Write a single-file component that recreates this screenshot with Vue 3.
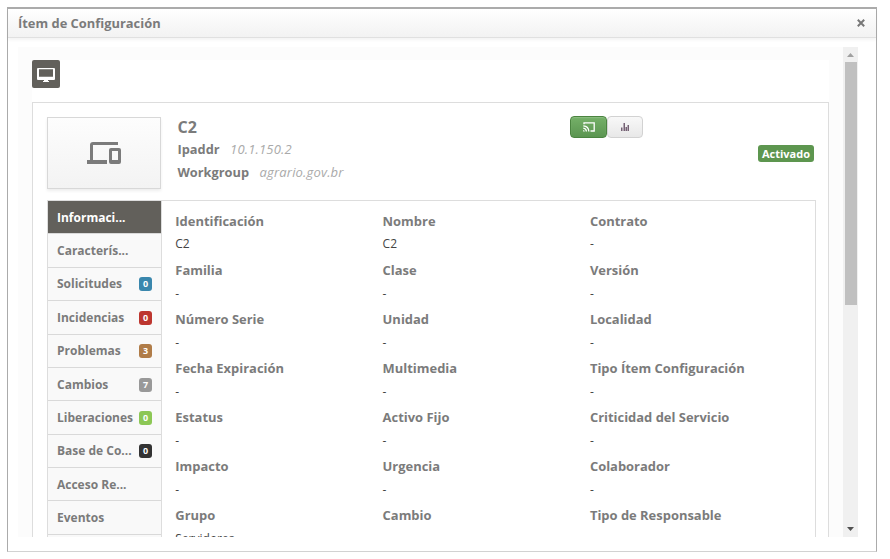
<script setup>
const tabs = [
  { label: 'Informaci...', active: true },
  { label: 'Caracterís...' },
  { label: 'Solicitudes', count: 0, tone: 'blue' },
  { label: 'Incidencias', count: 0, tone: 'red' },
  { label: 'Problemas', count: 3, tone: 'brown' },
  { label: 'Cambios', count: 7, tone: 'gray' },
  { label: 'Liberaciones', count: 0, tone: 'green' },
  { label: 'Base de Co...', count: 0, tone: 'dark' },
  { label: 'Acceso Re...' },
  { label: 'Eventos' },
  { label: '' },
]

const fields = [
  ['Identificación', 'C2'], ['Nombre', 'C2'], ['Contrato', '-'],
  ['Familia', '-'], ['Clase', '-'], ['Versión', '-'],
  ['Número Serie', '-'], ['Unidad', '-'], ['Localidad', '-'],
  ['Fecha Expiración', '-'], ['Multimedia', '-'], ['Tipo Ítem Configuración', '-'],
  ['Estatus', '-'], ['Activo Fijo', '-'], ['Criticidad del Servicio', '-'],
  ['Impacto', '-'], ['Urgencia', '-'], ['Colaborador', '-'],
  ['Grupo', 'Servidores'], ['Cambio', ''], ['Tipo de Responsable', ''],
]
</script>

<template>
  <div class="window">
    <header class="titlebar">
      <span class="title">Ítem de Configuración</span>
      <svg class="close" viewBox="0 0 8 8" width="8" height="8"><path d="M.8 .8l6.4 6.4M7.2 .8L.8 7.2" /></svg>
    </header>
    <div class="viewport">
      <div class="content">
        <button class="monitor">
          <svg viewBox="0 0 18 14" width="18" height="14">
            <path fill="#fff" fill-rule="evenodd" d="M1 0H17Q18 0 18 1V11Q18 12 17 12H11V13H12V14H6V13H7V12H1Q0 12 0 11V1Q0 0 1 0ZM2 1.3V8.7H16V1.3Z" />
          </svg>
        </button>
        <section class="card">
          <div class="summary">
            <div class="thumb">
              <svg viewBox="0 0 34 23" width="34" height="23">
                <path fill="#7b7b7b" fill-rule="evenodd" d="M6 3V18H20V22H0V18H3V3Q3 0 6 0H31V3ZM24 6H32Q34 6 34 8V20Q34 22 32 22H24Q22 22 22 20V8Q22 6 24 6ZM25 9V18H31V9Z" />
              </svg>
            </div>
            <div class="info">
              <h1>C2</h1>
              <p><b>Ipaddr</b><i>10.1.150.2</i></p>
              <p><b>Workgroup</b><i>agrario.gov.br</i></p>
            </div>
            <div class="actions">
              <button class="act primary">
                <svg viewBox="0 0 12 10" width="12" height="10" fill="none" stroke="#fff" stroke-width="1.3">
                  <path d="M1 2.3V.8H11.2V9H7.5M.3 3.8Q5.8 4 5.8 9.6M.3 6.2Q3.3 6.5 3.4 9.6" /><path d="M.2 9.6V8Q1.7 8 1.8 9.6Z" fill="#fff" stroke="none" />
                </svg>
              </button>
              <button class="act plain">
                <svg viewBox="0 0 8 8" width="8" height="8" fill="#756174">
                  <path d="M0 4.5h1.5V8H0zM2.5 0H4v8H2.5zM4.5 4H6v4H4.5zM6.5 2H8v6H6.5z" />
                </svg>
              </button>
            </div>
            <span class="status">Activado</span>
          </div>
          <div class="details">
            <nav>
              <a v-for="(t, i) in tabs" :key="i" :class="{ active: t.active }">
                <span>{{ t.label }}</span>
                <em v-if="t.tone" :class="t.tone">{{ t.count }}</em>
              </a>
            </nav>
            <dl>
              <div v-for="f in fields" :key="f[0]">
                <dt>{{ f[0] }}</dt>
                <dd>{{ f[1] }}</dd>
              </div>
            </dl>
          </div>
        </section>
      </div>
      <div class="scrollbar">
        <svg class="arrow" viewBox="0 0 15 15" width="15" height="15"><path d="M4 10L7.5 6L11 10Z" fill="#a0a0a0" /></svg>
        <div class="thumb-bar"></div>
        <svg class="arrow" viewBox="0 0 15 15" width="15" height="15"><path d="M4 5L11 5L7.5 9Z" fill="#505050" /></svg>
      </div>
    </div>
  </div>
</template>

<style>
body { margin: 0; background: #fff; overflow: hidden; }
</style>

<style scoped>
* { box-sizing: border-box; }
.window {
  width: 870px;
  height: 545px;
  margin: 7px 0 0 7px;
  border: 1px solid #ababab;
  border-top-width: 2px;
  border-bottom-color: #d2d2d2;
  background: #fff;
  font: 12px/20px "Open Sans", sans-serif;
  color: #7b7b7b;
}
.titlebar {
  display: flex;
  justify-content: space-between;
  align-items: center;
  height: 29px;
  padding: 0 11px 0 10px;
  border-bottom: 1px solid #e0e0e0;
  background: linear-gradient(#fff, #f2f2f2);
  box-shadow: 0 2px 3px rgba(0, 0, 0, .05);
}
.title { font-size: 12.9px; font-weight: 700; }
.close { stroke: #777; stroke-width: 2; }
.viewport {
  display: flex;
  width: 840px;
  height: 490px;
  margin: 9px 0 0 10px;
  overflow: hidden;
  background: #fcfcfc;
}
.content {
  width: 797px;
  height: 600px;
  margin: 13px 15px 0 14px;
  background: #fff;
  flex: none;
}
button { padding: 0; font: inherit; display: flex; align-items: center; justify-content: center; }
.monitor {
  width: 28px;
  height: 28px;
  border: 0;
  border-radius: 2px;
  background: #62605b;
}
.monitor svg { margin-top: 1px; }
.card {
  width: 797px;
  height: 560px;
  margin-top: 14px;
  padding: 14px;
  border: 1px solid #ddd;
}
.summary { display: flex; height: 83px; }
.thumb {
  display: flex;
  align-items: center;
  justify-content: center;
  width: 114px;
  height: 72px;
  border: 1px solid #d8d8d8;
  background: linear-gradient(#fdfdfd, #f3f3f3);
  box-shadow: 0 2px 3px rgba(0, 0, 0, .07);
}
.thumb svg { margin-top: 1px; }
.info { width: 392px; padding-left: 16.5px; }
h1 { margin: 0; font-size: 16px; line-height: 20px; font-weight: 700; }
p { margin: 0 0 3px; font-size: 12.8px; line-height: 20px; }
h1 + p { margin-top: 2px; }
i { margin-left: 10.5px; color: #aaa; font-size: 13px; letter-spacing: .18px; }
.actions { display: flex; width: 182px; margin: -1px 0 0 17px; }
.act { height: 22px; border-radius: 4px; }
.primary { width: 37px; border: 1px solid #4b8440; background: linear-gradient(#75b068, #5b9551); box-shadow: inset 0 1px 1px #8bbd80; }
.plain { width: 36px; border: 1px solid #d2d2d2; background: linear-gradient(#f8f8f8, #e8e8e8); }
.status {
  width: 56px;
  height: 17px;
  margin: 28px 0 0 6px;
  border-radius: 3px;
  background: #5d964f;
  color: #fff;
  font-size: 11px;
  font-weight: 700;
  line-height: 17px;
  text-align: center;
}
.details {
  display: flex;
  width: 769px;
  height: 500px;
  border: 1px solid #ddd;
}
nav { width: 114px; border-right: 1px solid #ddd; flex: none; }
nav a {
  display: flex;
  justify-content: space-between;
  align-items: center;
  height: 33.38px;
  padding: 1px 9px 0;
  border-bottom: 1px solid #d9d9d9;
  background: #f9f9f9;
  font-size: 12px;
  font-weight: 700;
  white-space: nowrap;
}
nav a.active { background: #62605b; color: #fff; }
em {
  width: 13px;
  height: 14px;
  border-radius: 3px;
  color: #fff;
  font-size: 9px;
  line-height: 14px;
  font-style: normal;
  text-align: center;
}
.blue { background: #3a87ad; }
.red { background: #bd362f; }
.brown { background: #b07c48; }
.gray { background: #999; }
.green { background: #8cc755; }
.dark { background: #333; }
dl {
  display: grid;
  grid-template-columns: repeat(3, 207.3px);
  grid-auto-rows: 49.1px;
  align-content: start;
  margin: 9.8px 0 0 13.3px;
}
dt { font-size: 12.95px; font-weight: 700; line-height: 20px; white-space: nowrap; }
dd { margin: 3.7px 0 0; font-size: 12px; line-height: 20px; color: #444; }
.scrollbar {
  display: flex;
  flex-direction: column;
  width: 15px;
  margin-left: -1px;
  flex: none;
  background: #f0f0f0;
}
.arrow { display: block; flex: none; }
.thumb-bar { flex: none; width: 12px; height: 243px; margin: 0 auto 217px 2px; background: #c0c0c0; }
</style>
